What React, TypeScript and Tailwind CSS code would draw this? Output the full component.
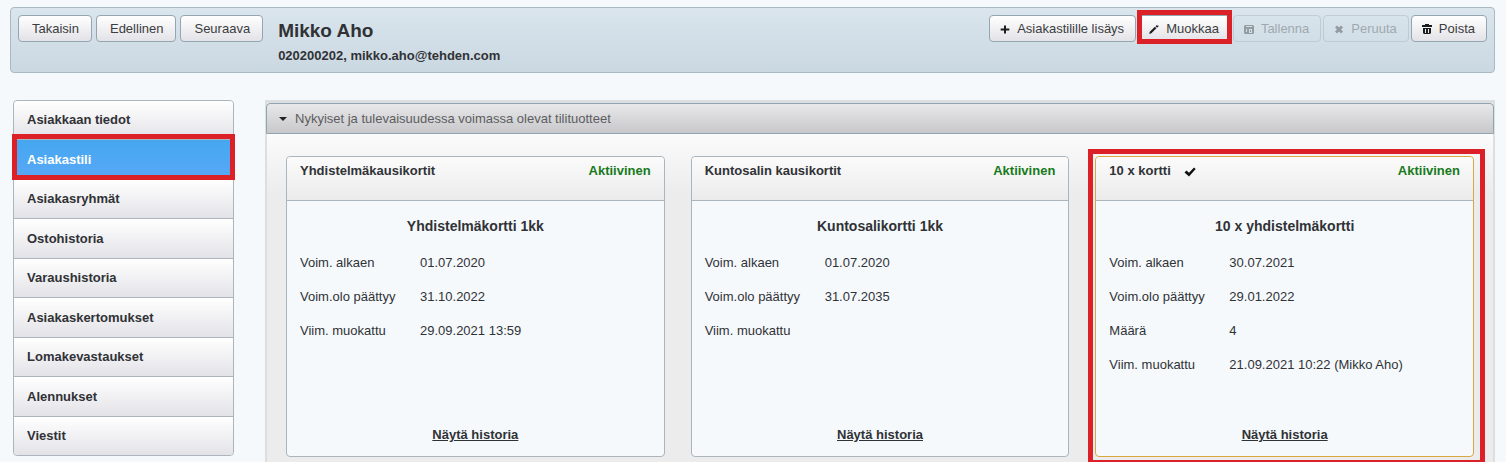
import type { ReactNode } from "react";
import clsx from "clsx";

type Row = { label: string; value?: string };
type Product = { group: string; title: string; selected?: boolean; rows: Row[] };

const menu = [
  "Asiakkaan tiedot",
  "Asiakastili",
  "Asiakasryhmät",
  "Ostohistoria",
  "Varaushistoria",
  "Asiakaskertomukset",
  "Lomakevastaukset",
  "Alennukset",
  "Viestit",
];

const products: Product[] = [
  {
    group: "Yhdistelmäkausikortit",
    title: "Yhdistelmäkortti 1kk",
    rows: [
      { label: "Voim. alkaen", value: "01.07.2020" },
      { label: "Voim.olo päättyy", value: "31.10.2022" },
      { label: "Viim. muokattu", value: "29.09.2021 13:59" },
    ],
  },
  {
    group: "Kuntosalin kausikortit",
    title: "Kuntosalikortti 1kk",
    rows: [
      { label: "Voim. alkaen", value: "01.07.2020" },
      { label: "Voim.olo päättyy", value: "31.07.2035" },
      { label: "Viim. muokattu" },
    ],
  },
  {
    group: "10 x kortti",
    title: "10 x yhdistelmäkortti",
    selected: true,
    rows: [
      { label: "Voim. alkaen", value: "30.07.2021" },
      { label: "Voim.olo päättyy", value: "29.01.2022" },
      { label: "Määrä", value: "4" },
      { label: "Viim. muokattu", value: "21.09.2021 10:22 (Mikko Aho)" },
    ],
  },
];

function Icon({ children }: { children: ReactNode }) {
  return (
    <svg viewBox="0 0 16 16" className="size-4 shrink-0" fill="currentColor" aria-hidden="true">
      {children}
    </svg>
  );
}

const PlusIcon = () => (
  <Icon>
    <path fill="#1c1d1f" d="M7 4.5h2v3h3.3v2H9v3H7v-3H3.7v-2H7z" />
  </Icon>
);

const PencilIcon = () => (
  <Icon>
    <path fill="#1c1d1f" d="M3.2 13l.6-2.3 5.1-4.9 1.5 1.5-5 5zM9.600 5.200l1.200-1.200.8.700 1.100-.3-.3 1.100-1.300 1.200z" />
  </Icon>
);

const DiskIcon = () => (
  <Icon>
    <path
      fill="#1c1d1f"
      fillRule="evenodd"
      d="M4 4h8l1 1v7l-1 1H4l-1-1V5zM5 5v1h6V5zM5 8v3h1V8zM8 8v4h3V8zM9 9h1v2H9z"
    />
  </Icon>
);

const CloseIcon = () => (
  <Icon>
    <path fill="#1c1d1f" d="M4 6.5l2-2 2 2 2-2 2 2-2 2 2 2-2 2-2-2-2 2-2-2 2-2z" />
  </Icon>
);

const TrashIcon = () => (
  <Icon>
    <path
      fill="#1c1d1f"
      fillRule="evenodd"
      d="M6 3h4v1h3v2H3V4h3zM4 7h8v5l-1 1H5l-1-1zM6 8v4h1V8zM9 8v4h1V8z"
    />
  </Icon>
);

// Red frame that lies over the part of the page being pointed out
function Marker({ className }: { className: string }) {
  return <span aria-hidden="true" className={clsx("pointer-events-none absolute z-10 border-5 border-[#dc2027]", className)} />;
}

type ButtonProps = { children: ReactNode; icon?: ReactNode; disabled?: boolean; marked?: boolean };

function Button({ children, icon, disabled, marked }: ButtonProps) {
  return (
    <button
      type="button"
      disabled={disabled}
      className={clsx(
        "relative flex h-[27px] items-center gap-1 rounded border border-[#94a6b1] whitespace-nowrap text-[#3b3d40]",
        icon ? "pr-[11px] pl-[7px]" : "pr-3 pl-[13px]",
        disabled ? "opacity-35" : "bg-linear-to-b from-white to-[#e3e2e7]",
      )}
    >
      {icon}
      {children}
      {marked && <Marker className="-inset-x-[2px] -top-[6px] -bottom-[3px]" />}
    </button>
  );
}

function Header() {
  return (
    <header className="flex h-[66px] items-start rounded border border-[#a9bac5] bg-linear-to-b from-[#dae5ed] to-[#cad8e1] p-[7px]">
      <div className="flex gap-1">
        <Button>Takaisin</Button>
        <Button>Edellinen</Button>
        <Button>Seuraava</Button>
      </div>
      <div className="ml-[15px] pt-1">
        <h1 className="text-[19px] leading-6 font-bold">Mikko Aho</h1>
        <p className="text-[13px] leading-[26px] font-bold">020200202, mikko.aho@tehden.com</p>
      </div>
      <div className="ml-auto flex gap-[2px]">
        <Button icon={<PlusIcon />}>Asiakastilille lisäys</Button>
        <Button icon={<PencilIcon />} marked>
          Muokkaa
        </Button>
        <Button icon={<DiskIcon />} disabled>
          Tallenna
        </Button>
        <Button icon={<CloseIcon />} disabled>
          Peruuta
        </Button>
        <Button icon={<TrashIcon />}>Poista</Button>
      </div>
    </header>
  );
}

function SideMenu() {
  return (
    <nav className="w-[221px] shrink-0">
      <ul className="flex h-[356px] flex-col rounded border border-[#aab5be]">
        {menu.map((item) => {
          const active = item === "Asiakastili";
          return (
            <li key={item} className="flex flex-1 border-b border-[#aab5be] first:rounded-t last:rounded-b last:border-b-0">
              <a
                href="#"
                aria-current={active ? "page" : undefined}
                className={clsx(
                  "relative flex grow items-center rounded-[inherit] px-[13px] font-bold",
                  active
                    ? "bg-linear-to-b from-[#45a7f0] to-[#58a8f7] text-white"
                    : "bg-linear-to-b from-white to-[#e3e2e7]",
                )}
              >
                {item}
                {active && <Marker className="-inset-x-[2px] -top-[6px] -bottom-px" />}
              </a>
            </li>
          );
        })}
      </ul>
    </nav>
  );
}

function ProductCard({ group, title, selected, rows }: Product) {
  return (
    <article
      className={clsx(
        "relative flex h-[301px] flex-col rounded border bg-[#f5f9fc]",
        selected ? "border-[#d9a843]" : "border-[#aab5be]",
      )}
    >
      <div className="flex h-11 items-start justify-between rounded-t border-b border-[#aab5be] bg-linear-to-b from-[#fbfbfb] to-[#ebebeb] px-[13px] pt-1 leading-5 font-bold">
        <h3 className="flex items-center gap-3">
          {group}
          {selected && (
            <svg viewBox="0 0 16 16" className="size-4" fill="#111" role="img" aria-label="Valittu">
              <path d="M1.5 9.5l2-2 2.5 2.3L11 4.5l1.700 1.500L6 13.500z" />
            </svg>
          )}
        </h3>
        <span className="text-[#177a1c]">Aktiivinen</span>
      </div>
      <h4 className="pt-[15px] text-center text-sm font-bold">{title}</h4>
      <dl className="px-[13px] pt-[10px]">
        {rows.map((row) => (
          <div key={row.label} className="flex h-[34px] items-center">
            <dt className="w-[120px]">{row.label}</dt>
            <dd>{row.value}</dd>
          </div>
        ))}
      </dl>
      <a href="#" className="mx-auto mt-auto mb-[11px] leading-5 font-bold underline">
        Näytä historia
      </a>
      {selected && <Marker className="-top-2 -right-3 -bottom-[9px] -left-2" />}
    </article>
  );
}

export default function App() {
  return (
    <div className="h-screen overflow-hidden bg-[#f5f9fc] pt-[7px] pr-[11px] pl-[10px] font-['Liberation_Sans',Arial,sans-serif] text-[13px] text-[#303236]">
      <Header />
      <div className="flex items-start gap-[31px] pt-[27px] pl-[3px]">
        <SideMenu />
        <main className="min-w-0 grow border-x-2 border-t-3 border-[#dcdfe2]">
          <div className="-mx-px">
            <button
              type="button"
              className="flex h-[31px] w-full items-center gap-2 rounded-t border border-[#8fa5b1] bg-linear-to-b from-[#e8e8ea] to-[#c8c8cb] px-3 text-[#5b5d60]"
            >
              <svg viewBox="0 0 8 4" className="h-1 w-2" fill="#222" aria-hidden="true">
                <path d="M0 0h8L4 4z" />
              </svg>
              Nykyiset ja tulevaisuudessa voimassa olevat tilituotteet
            </button>
          </div>
          <section className="grid grid-cols-3 gap-[26px] bg-linear-to-b from-[#fbfbfb] to-[#ececec] to-[60px] px-[19px] pt-[22px] pb-8">
            {products.map((product) => (
              <ProductCard key={product.group} {...product} />
            ))}
          </section>
        </main>
      </div>
    </div>
  );
}
